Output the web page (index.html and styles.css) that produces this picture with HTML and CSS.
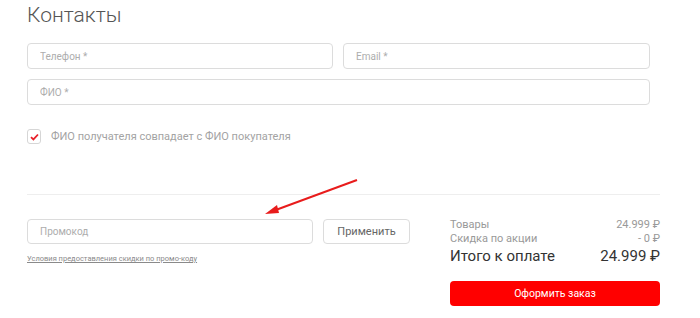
FILE: index.html
```html
<!DOCTYPE html>
<html lang="ru">
<head>
  <meta charset="UTF-8">
  <title>Контакты</title>
  <link rel="stylesheet" href="styles.css">
</head>
<body>
  <div class="page">
    <h1 class="title">Контакты</h1>
    <div class="fields">
      <input class="field" type="text" placeholder="Телефон *">
      <input class="field" type="text" placeholder="Email *">
      <input class="field wide" type="text" placeholder="ФИО *">
    </div>
    <label class="check">
      <span class="box">
        <svg width="9" height="8" viewBox="0 0 9 8"><path d="M1 4.2 L3.4 6.4 L8 1.5" fill="none" stroke="#e8202a" stroke-width="1.8"/></svg>
      </span>
      ФИО получателя совпадает с ФИО покупателя
    </label>
    <hr class="divider">
    <div class="bottom">
      <div class="promo">
        <div class="promo-row">
          <input class="field promo-input" type="text" placeholder="Промокод">
          <button class="apply">Применить</button>
        </div>
        <a class="terms" href="#">Условия предоставления скидки по промо-коду</a>
      </div>
      <div class="summary">
        <div class="line"><span>Товары</span><span>24.999 ₽</span></div>
        <div class="line"><span>Скидка по акции</span><span>- 0 ₽</span></div>
        <div class="line total"><span>Итого к оплате</span><span>24.999 ₽</span></div>
        <button class="order">Оформить заказ</button>
      </div>
    </div>
    <svg class="arrow" width="110" height="50" viewBox="0 0 110 50">
      <line x1="104" y1="4" x2="20" y2="35" stroke="#e81c1c" stroke-width="2"/>
      <path d="M12 38 L24 29 L26 37 Z" fill="#e81c1c"/>
    </svg>
  </div>
</body>
</html>
```

FILE: styles.css
```css
* { box-sizing: border-box; }
body {
  margin: 0;
  background: #fff;
  font-family: Roboto, "Noto Sans", sans-serif;
  color: #333;
}
.page { position: relative; padding: 0 40px 0 27px; }
.title {
  margin: 0;
  padding-top: 2px;
  font-size: 21px;
  font-weight: 300;
  color: #555;
  line-height: 26px;
}
.fields {
  display: grid;
  grid-template-columns: 306px 307px;
  gap: 10px;
  margin-top: 15px;
  width: 623px;
}
.field {
  height: 26px;
  border: 1px solid #dcdcdc;
  border-radius: 4px;
  padding: 0 12px;
  font-family: inherit;
  font-size: 10px;
  color: #333;
  outline: none;
}
.field::placeholder { color: #adadad; }
.wide { grid-column: 1 / 3; }
.check {
  display: flex;
  align-items: center;
  gap: 10px;
  margin-top: 24px;
  font-size: 11px;
  color: #a3a3a3;
}
.box {
  width: 14px;
  height: 15px;
  border: 1px solid #d6d6d6;
  border-radius: 3px;
  display: flex;
  align-items: center;
  justify-content: center;
}
.divider {
  margin: 50px 0 0;
  border: 0;
  border-top: 1px solid #eee;
  width: 633px;
}
.bottom {
  display: flex;
  justify-content: space-between;
  width: 633px;
  margin-top: 24px;
}
.promo-row { display: flex; gap: 10px; }
.promo-input { width: 286px; height: 25px; padding: 0 12px; }
.apply {
  width: 87px;
  height: 25px;
  border: 1px solid #dcdcdc;
  border-radius: 4px;
  background: #fff;
  font-family: inherit;
  font-size: 11px;
  color: #666;
}
.terms {
  display: block;
  margin-top: 10px;
  font-size: 7.5px;
  color: #8a8a8a;
}
.summary { width: 210px; font-size: 11px; color: #999; margin-top: -1px; }
.line { display: flex; justify-content: space-between; line-height: 14px; }
.line.total { font-size: 15px; color: #333; line-height: 20px; }
.order {
  display: block;
  width: 100%;
  height: 25px;
  margin-top: 15px;
  border: 0;
  border-radius: 4px;
  background: #ff0000;
  color: #fff;
  font-family: inherit;
  font-size: 10.5px;
}
.arrow { position: absolute; left: 253px; top: 176px; }
```
